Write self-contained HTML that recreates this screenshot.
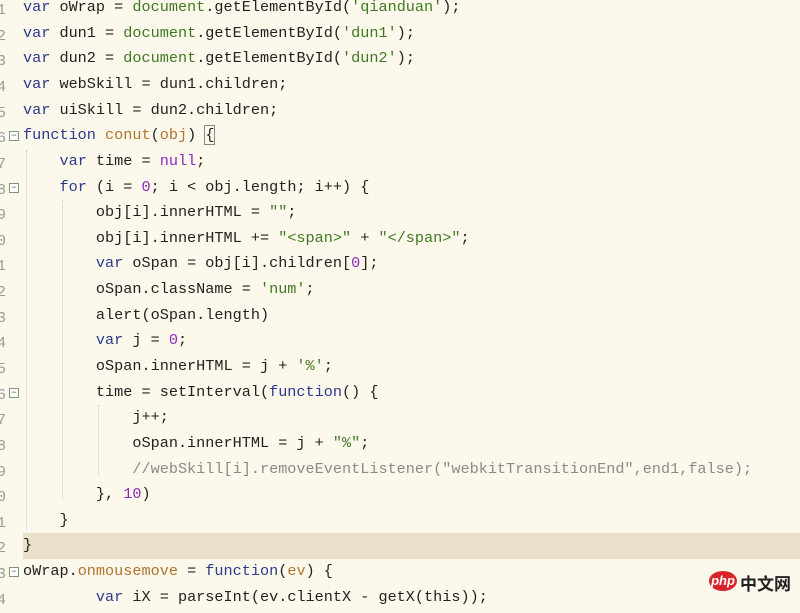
<!DOCTYPE html><html><head><style>
body{margin:0;width:800px;height:601px;overflow:hidden;background:#fcf8ec;font-family:"Liberation Mono",monospace;font-size:15.2px;position:relative}
.l{position:absolute;left:0;height:25.64px;line-height:25.64px;width:800px;white-space:pre}
.n{position:absolute;left:-3px;color:#999;font-size:15px;top:3px}
.c{position:absolute;left:23px;color:#222}
.k{color:#2a3a8c}.s{color:#3f7a22}.f{color:#b0742c}.m{color:#8a2bb8}.g{color:#8a8a8a}
.fold{position:absolute;left:9px;top:8px;width:8px;height:8px;border:1px solid #7a9a7a;font-size:9px;line-height:8px;text-align:center;color:#555;background:#fff}
.hl{background:#e9e1c9}
.guide{position:absolute;border-left:1px dotted #ccc;width:0}
</style></head><body>
<div class="guide" style="left:26px;top:150px;height:380px"></div>
<div class="guide" style="left:62px;top:200px;height:300px"></div>
<div class="guide" style="left:98px;top:405px;height:70px"></div>
<div class="l" style="top:-5px"><span class="n">1</span><span class="c"><span class="k">var</span> oWrap = <span class="s">document</span>.getElementById(<span class="s">'qianduan'</span>);</span></div>
<div class="l" style="top:20.6px"><span class="n">2</span><span class="c"><span class="k">var</span> dun1 = <span class="s">document</span>.getElementById(<span class="s">'dun1'</span>);</span></div>
<div class="l" style="top:46.3px"><span class="n">3</span><span class="c"><span class="k">var</span> dun2 = <span class="s">document</span>.getElementById(<span class="s">'dun2'</span>);</span></div>
<div class="l" style="top:71.9px"><span class="n">4</span><span class="c"><span class="k">var</span> webSkill = dun1.children;</span></div>
<div class="l" style="top:97.6px"><span class="n">5</span><span class="c"><span class="k">var</span> uiSkill = dun2.children;</span></div>
<div class="l" style="top:123.2px"><span class="n">6</span><span class="fold">−</span><span class="c"><span class="k">function</span> <span class="f">conut</span>(<span class="f">obj</span>) <span style="outline:1px solid #888">{</span></span></div>
<div class="l" style="top:148.8px"><span class="n">7</span><span class="c">    <span class="k">var</span> time = <span class="m">null</span>;</span></div>
<div class="l" style="top:174.5px"><span class="n">8</span><span class="fold">−</span><span class="c">    <span class="k">for</span> (i = <span class="m">0</span>; i &lt; obj.length; i++) {</span></div>
<div class="l" style="top:200.1px"><span class="n">9</span><span class="c">        obj[i].innerHTML = <span class="s">""</span>;</span></div>
<div class="l" style="top:225.8px"><span class="n">0</span><span class="c">        obj[i].innerHTML += <span class="s">"&lt;span&gt;"</span> + <span class="s">"&lt;/span&gt;"</span>;</span></div>
<div class="l" style="top:251.4px"><span class="n">1</span><span class="c">        <span class="k">var</span> oSpan = obj[i].children[<span class="m">0</span>];</span></div>
<div class="l" style="top:277px"><span class="n">2</span><span class="c">        oSpan.className = <span class="s">'num'</span>;</span></div>
<div class="l" style="top:302.7px"><span class="n">3</span><span class="c">        alert(oSpan.length)</span></div>
<div class="l" style="top:328.3px"><span class="n">4</span><span class="c">        <span class="k">var</span> j = <span class="m">0</span>;</span></div>
<div class="l" style="top:354px"><span class="n">5</span><span class="c">        oSpan.innerHTML = j + <span class="s">'%'</span>;</span></div>
<div class="l" style="top:379.6px"><span class="n">6</span><span class="fold">−</span><span class="c">        time = setInterval(<span class="k">function</span>() {</span></div>
<div class="l" style="top:405.2px"><span class="n">7</span><span class="c">            j++;</span></div>
<div class="l" style="top:430.9px"><span class="n">8</span><span class="c">            oSpan.innerHTML = j + <span class="s">"%"</span>;</span></div>
<div class="l" style="top:456.5px"><span class="n">9</span><span class="c g">            //webSkill[i].removeEventListener("webkitTransitionEnd",end1,false);</span></div>
<div class="l" style="top:482.2px"><span class="n">0</span><span class="c">        }, <span class="m">10</span>)</span></div>
<div class="l" style="top:507.8px"><span class="n">1</span><span class="c">    }</span></div>
<div class="l" style="top:533.4px"><span class="n">2</span><span class="c hl" style="left:23px;width:777px">}</span></div>
<div class="l" style="top:559.1px"><span class="n">3</span><span class="fold">−</span><span class="c">oWrap.<span class="f">onmousemove</span> = <span class="k">function</span>(<span class="f">ev</span>) {</span></div>
<div class="l" style="top:584.7px"><span class="n">4</span><span class="c">        <span class="k">var</span> iX = parseInt(ev.clientX - getX(this));</span></div>
<div style="position:absolute;left:709px;top:571px;width:28px;height:20px;border-radius:50%;background:#d9232b;color:#fff;font:italic bold 13px 'Liberation Sans',sans-serif;text-align:center;line-height:19px">php</div>
<div style="position:absolute;left:740px;top:570px;font:bold 17px 'Liberation Sans','Noto Sans CJK SC',sans-serif;color:#222">中文网</div>
</body></html>
